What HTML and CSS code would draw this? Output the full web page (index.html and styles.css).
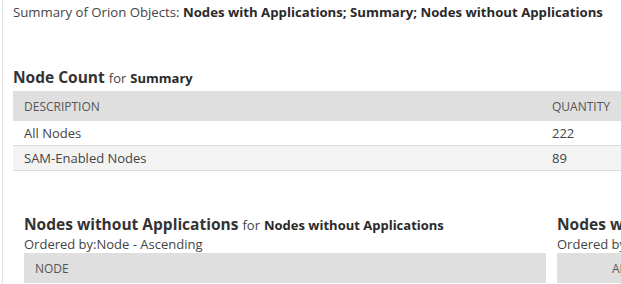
FILE: index.html
```html
<!DOCTYPE html>
<html>
<head>
<meta charset="utf-8">
<link rel="stylesheet" href="styles.css">
</head>
<body>
<div class="page">
  <div class="objects">Summary of Orion Objects: <b>Nodes with Applications; Summary; Nodes without Applications</b></div>

  <section class="summary">
    <h2 class="title">Node Count <span class="for">for</span> <span class="src">Summary</span></h2>
    <table class="grid wide">
      <thead>
        <tr><th class="desc">DESCRIPTION</th><th>QUANTITY</th></tr>
      </thead>
      <tbody>
        <tr><td class="desc">All Nodes</td><td>222</td></tr>
        <tr class="alt"><td class="desc">SAM-Enabled Nodes</td><td>89</td></tr>
      </tbody>
    </table>
  </section>

  <div class="columns">
    <section class="col">
      <h2 class="title">Nodes without Applications <span class="for">for</span> <span class="src">Nodes without Applications</span></h2>
      <div class="order">Ordered by:Node - Ascending</div>
      <table class="grid">
        <thead><tr><th>NODE</th></tr></thead>
      </table>
    </section>
    <section class="col">
      <h2 class="title">Nodes with Applications <span class="for">for</span> <span class="src">Nodes with Applications</span></h2>
      <div class="order">Ordered by:Application - Ascending</div>
      <table class="grid">
        <thead><tr><th class="app">APPLICATION</th></tr></thead>
      </table>
    </section>
  </div>
</div>
</body>
</html>
```
FILE: styles.css
```css
html, body {
  margin: 0;
  padding: 0;
  background: #fff;
  overflow: hidden;
}
body {
  font-family: "Open Sans", "Liberation Sans", sans-serif;
  font-size: 13px;
  color: #444;
}
.page {
  margin-left: 2px;
  border-left: 1px solid #e2e2e2;
  min-height: 284px;
  padding: 3px 0 0 10px;
  box-sizing: border-box;
  width: 1400px;
}
.objects {
  white-space: nowrap;
  line-height: 18px;
  font-size: 13.2px;
}
.objects b {
  color: #2a2a2a;
  font-weight: 700;
}
.summary {
  margin-top: 47px;
  width: 720px;
}
.title {
  margin: 0 0 4px;
  font-size: 15.5px;
  font-weight: 700;
  color: #333;
  line-height: 18px;
  white-space: nowrap;
}
.title .for {
  font-size: 13px;
  font-weight: 400;
  color: #444;
}
.title .src {
  font-size: 13px;
  font-weight: 700;
  color: #2a2a2a;
}
.grid {
  border-collapse: collapse;
  width: 100%;
}
.grid th {
  background: #dfdfdf;
  font-weight: 400;
  text-align: left;
  font-size: 12px;
  color: #555;
  height: 30px;
  padding: 0 11px;
  box-sizing: border-box;
}
.grid td {
  height: 24px;
  padding: 0 11px;
  border-bottom: 1px solid #dcdcdc;
  color: #444;
}
.grid tr.alt td {
  background: #f3f3f3;
}
.wide .desc {
  width: 506px;
}
.columns {
  display: flex;
  gap: 11px;
  margin-top: 44px;
  padding-left: 11px;
}
.col {
  width: 522px;
  flex: none;
}
.col .title {
  margin-bottom: 2px;
}
.order {
  line-height: 17px;
  white-space: nowrap;
}
.grid th.app {
  padding-left: 55px;
}
```
